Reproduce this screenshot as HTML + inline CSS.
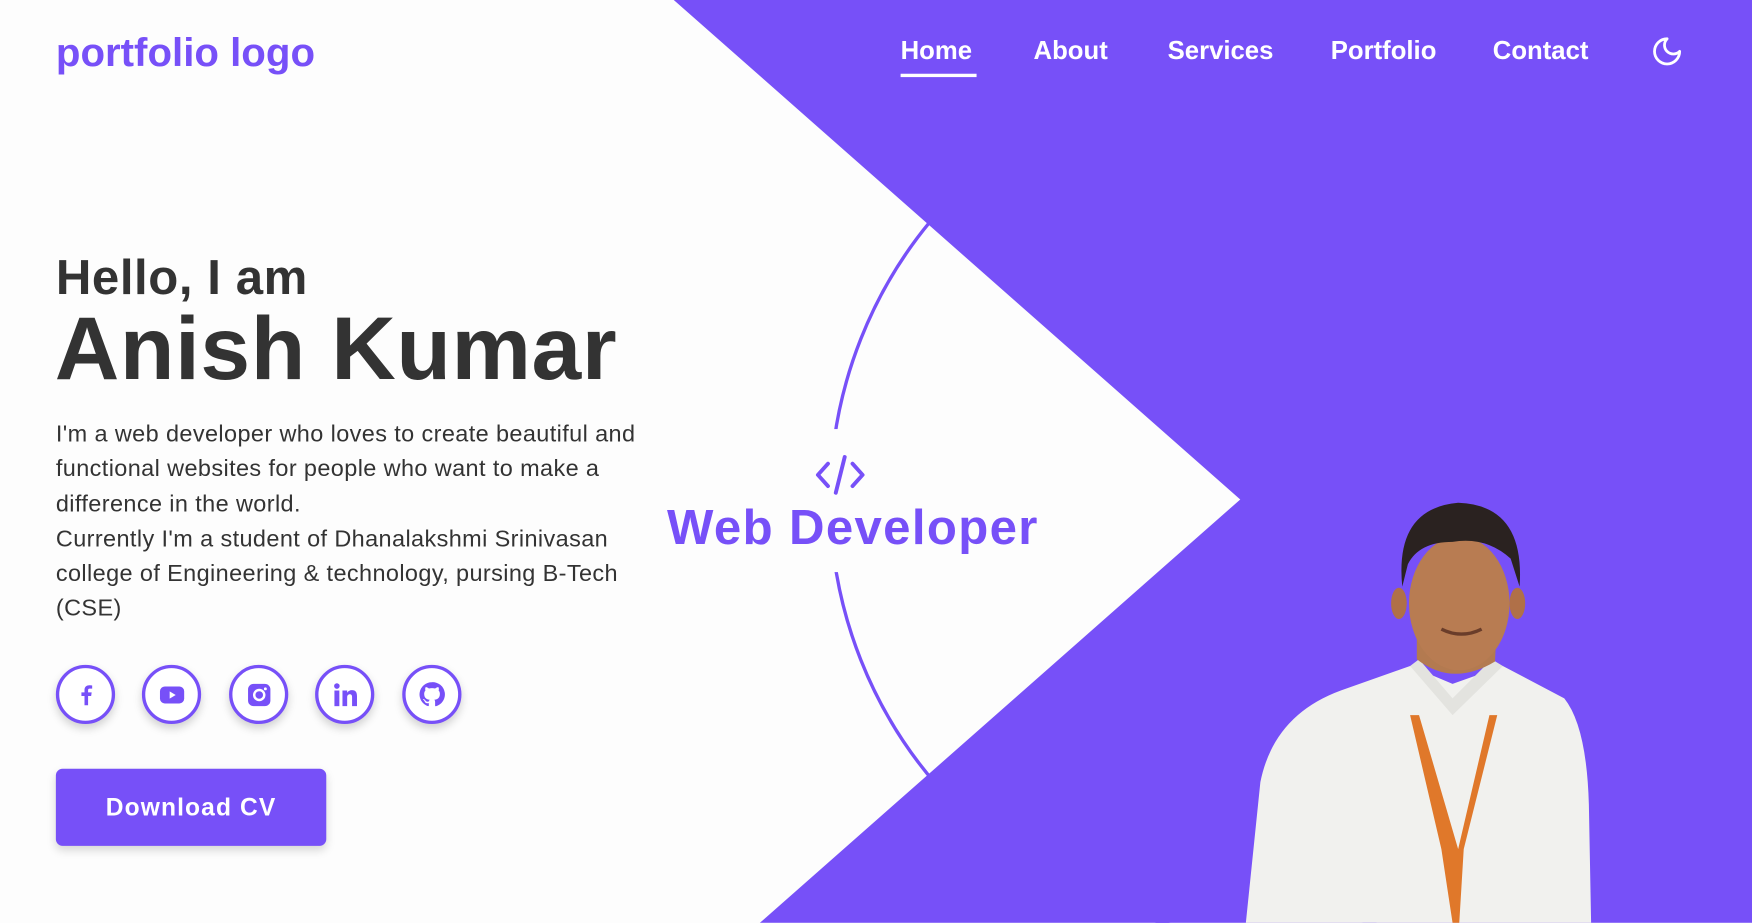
<!DOCTYPE html>
<html><head><meta charset="utf-8"><style>
html,body{margin:0;padding:0;width:1752px;height:923px;overflow:hidden;background:#fdfdfd}
#w{position:absolute;left:0;top:0;width:1568px;height:826px;transform:scale(1.11735);transform-origin:0 0;font-family:"Liberation Sans",sans-serif;overflow:hidden}
.abs{position:absolute}
.nav a{position:absolute;top:32px;color:#fff;font-size:23px;font-weight:bold;text-decoration:none;letter-spacing:0px}
.soc{position:absolute;top:595px;width:47px;height:47px;border:3px solid #7750f8;border-radius:50%;background:#fff;box-shadow:0 4px 8px rgba(0,0,0,.18);display:flex;align-items:center;justify-content:center}
p{margin:0}
</style></head><body><div id="w">
<svg class="abs" style="left:0;top:0" width="1568" height="826">
<circle cx="1133" cy="447" r="390" fill="none" stroke="#7750f8" stroke-width="3"/>
<rect x="730" y="384" width="30" height="128" fill="#fdfdfd"/>
<polygon points="603,0 1568,0 1568,826 680,826 1110,447" fill="#7750f8"/>
<path d="M1115 826 L1128 700 Q1140 640 1200 618 L1262 596 L1300 612 L1345 596 L1400 625 Q1420 650 1422 720 L1424 826 Z" fill="#f1f1ee"/>
<path d="M1262 596 L1300 640 L1345 596 L1335 590 L1300 625 L1270 590 Z" fill="#e3e3df"/>
<path d="M1262 640 L1290 760 L1300 826 L1306 826 L1310 760 L1340 640 L1333 640 L1305 760 L1270 640 Z" fill="#e0782a"/>
<path d="M1268 590 L1268 550 L1340 550 L1338 592 Q1300 615 1268 590 Z" fill="#b37a50"/>
<ellipse cx="1306" cy="540" rx="45" ry="60" fill="#b87c52"/>
<ellipse cx="1252" cy="540" rx="7" ry="14" fill="#b07048"/>
<ellipse cx="1358" cy="540" rx="7" ry="14" fill="#b07048"/>
<path d="M1255 525 Q1248 455 1305 450 Q1365 452 1360 525 L1352 500 Q1330 480 1300 485 Q1270 485 1260 505 Z" fill="#2a2220"/>
<path d="M1290 563 Q1308 572 1326 563" stroke="#6a3d2a" stroke-width="3" fill="none"/>
</svg>
<div class="abs" style="left:50px;top:26px;font-size:36px;font-weight:bold;color:#7750f8;letter-spacing:0px">portfolio logo</div>
<div class="nav">
<a style="left:806px">Home</a><div class="abs" style="left:806px;top:66px;width:68px;height:3px;background:#fff"></div>
<a style="left:925px">About</a><a style="left:1045px">Services</a><a style="left:1191px">Portfolio</a><a style="left:1336px">Contact</a>
</div>
<svg class="abs" style="left:1477px;top:31px" width="30" height="30" viewBox="0 0 24 24"><path d="M12 3a6 6 0 0 0 9 9 9 9 0 1 1-9-9Z" fill="none" stroke="#fff" stroke-width="2" stroke-linejoin="round"/></svg>
<div class="abs" style="left:50px;top:224px;font-size:44px;font-weight:bold;color:#333;letter-spacing:0.5px">Hello, I am</div>
<div class="abs" style="left:49px;top:266px;font-size:80px;font-weight:bold;color:#333;letter-spacing:0.5px">Anish Kumar</div>
<div class="abs" style="left:50px;top:373px;width:547px;height:200px;overflow:hidden"><p style="white-space:nowrap;font-size:21px;line-height:31.3px;color:#333;letter-spacing:0.35px">I'm a web developer who loves to create beautiful and<br>functional websites for people who want to make a<br>difference in the world.<br>Currently I'm a student of Dhanalakshmi Srinivasan<br>college of Engineering &amp; technology, pursing B-Tech<br>(CSE)</p></div>
<div class="abs" style="left:597px;top:451px;font-size:44px;font-weight:bold;color:#7750f8;letter-spacing:1.2px;line-height:1">Web Developer</div>
<svg class="abs" style="left:729px;top:405px" width="46" height="40" viewBox="0 0 46 40"><path d="M12 10 L3 20 L12 30 M34 10 L43 20 L34 30 M27 4 L19 36" stroke="#7750f8" stroke-width="3.5" fill="none" stroke-linecap="round" stroke-linejoin="round"/></svg>
<div class="soc" style="left:50px"><svg width="22" height="22" viewBox="0 0 24 24"><path d="M14 22V13h3l.5-3.5H14V7.5c0-1 .3-1.7 1.8-1.7H18V2.7C17.6 2.6 16.5 2.5 15.3 2.5 12.7 2.5 10.5 4 10.5 7v2.5H7.5V13h3v9Z" fill="#7750f8"/></svg></div>
<div class="soc" style="left:127px"><svg width="26" height="26" viewBox="0 0 24 24"><rect x="2" y="5" width="20" height="14" rx="4" fill="#7750f8"/><path d="M10 9l5 3-5 3z" fill="#fff"/></svg></div>
<div class="soc" style="left:205px"><svg width="24" height="24" viewBox="0 0 24 24"><rect x="2" y="2" width="20" height="20" rx="5" fill="#7750f8"/><circle cx="12" cy="12" r="4.5" fill="none" stroke="#fff" stroke-width="2.2"/><circle cx="17.5" cy="6.5" r="1.3" fill="#fff"/></svg></div>
<div class="soc" style="left:282px"><svg width="24" height="24" viewBox="0 0 24 24"><circle cx="4.5" cy="4" r="2.5" fill="#7750f8"/><rect x="2.3" y="8" width="4.4" height="14" fill="#7750f8"/><path d="M9.5 8h4.2v2c.8-1.4 2.4-2.3 4.3-2.3 3.3 0 4.5 2 4.5 5.3V22h-4.4v-8c0-1.7-.5-2.7-2-2.7s-2.4 1.1-2.4 2.7v8H9.5Z" fill="#7750f8"/></svg></div>
<div class="soc" style="left:360px"><svg width="25" height="25" viewBox="0 0 24 24"><path d="M12 1.5A10.5 10.5 0 0 0 8.7 22c.5.1.7-.2.7-.5v-2c-2.9.6-3.5-1.3-3.5-1.3-.5-1.200-1.2-1.5-1.2-1.5-1-.7.1-.7.1-.7 1 .1 1.6 1.1 1.6 1.1.9 1.6 2.5 1.1 3.1.9.1-.7.4-1.1.7-1.4-2.300-.3-4.8-1.2-4.8-5.2 0-1.1.4-2.1 1.1-2.8-.1-.3-.5-1.4.1-2.8 0 0 .9-.3 2.9 1.1a10 10 0 0 1 5.3 0c2-1.4 2.9-1.1 2.9-1.1.6 1.4.2 2.5.1 2.8.7.7 1.1 1.7 1.1 2.8 0 4-2.5 4.9-4.8 5.2.4.3.7 1 .7 2v3c0 .3.2.6.7.5A10.5 10.5 0 0 0 12 1.5Z" fill="#7750f8"/></svg></div>
<div class="abs" style="left:50px;top:688px;width:242px;height:69px;background:#7750f8;border-radius:6px;box-shadow:0 4px 8px rgba(0,0,0,.15);color:#fff;font-size:22px;font-weight:bold;letter-spacing:1px;display:flex;align-items:center;justify-content:center">Download CV</div>
</div></body></html>
